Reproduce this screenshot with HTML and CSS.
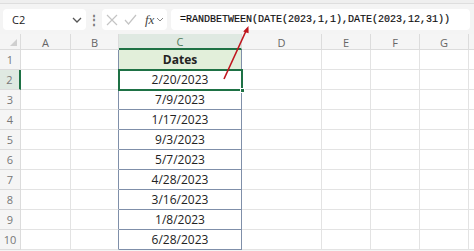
FILE: index.html
```html
<!DOCTYPE html>
<html>
<head>
<meta charset="utf-8">
<link rel="stylesheet" href="styles.css">
</head>
<body>
<div class="app">
  <div class="ribbon-edge"></div>
  <div class="formula-row">
    <div class="namebox"><span class="ref">C2</span>
      <svg class="chev" width="10" height="6" viewBox="0 0 10 6"><path d="M1 1 L5 5 L9 1" fill="none" stroke="#555" stroke-width="1.3"/></svg>
    </div>
    <div class="dots">⋮</div>
    <div class="iconbox">
      <svg width="12" height="12" viewBox="0 0 12 12"><path d="M1 1 L11 11 M11 1 L1 11" stroke="#c4c4c4" stroke-width="1.2"/></svg>
      <svg width="13" height="11" viewBox="0 0 13 11"><path d="M1 6 L4.5 10 L12 1" fill="none" stroke="#c4c4c4" stroke-width="1.2"/></svg>
      <span class="fx">fx</span>
      <svg width="8" height="5" viewBox="0 0 8 5"><path d="M1 1 L4 4 L7 1" fill="none" stroke="#888" stroke-width="1"/></svg>
    </div>
    <div class="formula">=RANDBETWEEN(DATE(2023,1,1),DATE(2023,12,31))</div>
  </div>
  <div class="sheet">
    <div class="hd corner"><span class="tri"></span></div>
    <div class="hd col">A</div><div class="hd col">B</div><div class="hd col sel-col">C</div><div class="hd col">D</div><div class="hd col">E</div><div class="hd col">F</div><div class="hd col">G</div><div class="hd col last"></div>

    <div class="hd row">1</div><div class="c"></div><div class="c pre"></div><div class="c data title">Dates</div><div class="c"></div><div class="c"></div><div class="c"></div><div class="c"></div><div class="c last"></div>
    <div class="hd row sel-row">2</div><div class="c"></div><div class="c pre"></div><div class="c data active">2/20/2023</div><div class="c"></div><div class="c"></div><div class="c"></div><div class="c"></div><div class="c last"></div>
    <div class="hd row">3</div><div class="c"></div><div class="c pre"></div><div class="c data">7/9/2023</div><div class="c"></div><div class="c"></div><div class="c"></div><div class="c"></div><div class="c last"></div>
    <div class="hd row">4</div><div class="c"></div><div class="c pre"></div><div class="c data">1/17/2023</div><div class="c"></div><div class="c"></div><div class="c"></div><div class="c"></div><div class="c last"></div>
    <div class="hd row">5</div><div class="c"></div><div class="c pre"></div><div class="c data">9/3/2023</div><div class="c"></div><div class="c"></div><div class="c"></div><div class="c"></div><div class="c last"></div>
    <div class="hd row">6</div><div class="c"></div><div class="c pre"></div><div class="c data">5/7/2023</div><div class="c"></div><div class="c"></div><div class="c"></div><div class="c"></div><div class="c last"></div>
    <div class="hd row">7</div><div class="c"></div><div class="c pre"></div><div class="c data">4/28/2023</div><div class="c"></div><div class="c"></div><div class="c"></div><div class="c"></div><div class="c last"></div>
    <div class="hd row">8</div><div class="c"></div><div class="c pre"></div><div class="c data">3/16/2023</div><div class="c"></div><div class="c"></div><div class="c"></div><div class="c"></div><div class="c last"></div>
    <div class="hd row">9</div><div class="c"></div><div class="c pre"></div><div class="c data">1/8/2023</div><div class="c"></div><div class="c"></div><div class="c"></div><div class="c"></div><div class="c last"></div>
    <div class="hd row">10</div><div class="c"></div><div class="c pre"></div><div class="c data">6/28/2023</div><div class="c"></div><div class="c"></div><div class="c"></div><div class="c"></div><div class="c last"></div>
  </div>
  <svg class="arrow" width="474" height="251" viewBox="0 0 474 251">
    <line x1="224" y1="79" x2="246" y2="31" stroke="#c0151d" stroke-width="1.6"/>
    <path d="M248.5 26 L243.2 31.5 L248.6 33.3 Z" fill="#c0151d"/>
  </svg>
</div>
</body>
</html>
```

FILE: styles.css
```css
html, body {
  margin: 0;
  padding: 0;
}
body {
  width: 474px;
  height: 251px;
  overflow: hidden;
  background: #ffffff;
  font-family: "Open Sans", "Noto Sans", sans-serif;
}
.app {
  position: relative;
  width: 474px;
  height: 251px;
  background: #f4f4f4;
}
.ribbon-edge {
  height: 3px;
  background: #efefef;
  border-bottom: 1px solid #dedede;
}
.formula-row {
  display: flex;
  align-items: center;
  height: 21px;
  padding: 5px 4px 4px 3px;
}
.namebox {
  width: 83px;
  height: 21px;
  box-sizing: border-box;
  background: #fff;
  border-radius: 4px;
  display: flex;
  align-items: center;
  justify-content: space-between;
  padding: 0 4px 0 9px;
  font-size: 11px;
  color: #222;
}
.chev { margin-top: 1px; }
.dots {
  width: 16px;
  text-align: center;
  color: #777;
  font-size: 12px;
  font-weight: bold;
}
.iconbox {
  width: 65px;
  height: 21px;
  box-sizing: border-box;
  background: #fff;
  border-radius: 4px;
  display: flex;
  align-items: center;
  gap: 6px;
  padding-left: 4px;
}
.fx {
  font-family: "Liberation Serif", serif;
  font-style: italic;
  font-size: 13px;
  color: #444;
  margin-left: 2px;
  margin-right: -4px;
}
.formula {
  flex: 1;
  margin-left: 4px;
  height: 21px;
  box-sizing: border-box;
  background: #fff;
  border-radius: 4px;
  padding-left: 9px;
  font-family: "Liberation Mono", monospace;
  font-size: 10px;
  line-height: 21px;
  color: #111;
  -webkit-text-stroke: 0.2px #111;
}
.sheet {
  display: grid;
  grid-template-columns: 21px 50px 48px 123px 80px 49px 49px 49px 5px;
  grid-template-rows: 16px repeat(10, 20px);
  background: #fff;
}
.hd {
  background: #f5f5f5;
  color: #666;
  font-size: 11px;
  display: flex;
  align-items: center;
  justify-content: center;
  box-sizing: border-box;
  border-right: 1px solid #dcdcdc;
  border-bottom: 1px solid #dcdcdc;
}
.corner { position: relative; }
.tri {
  position: absolute;
  right: 3px;
  bottom: 3px;
  width: 0;
  height: 0;
  border-left: 7px solid transparent;
  border-bottom: 7px solid #cfcfcf;
}
.col { padding-top: 1px; }
.sel-col {
  background: #dfe9e2;
  color: #4f7a5c;
  border-bottom: 2px solid #1e7145;
}
.row { color: #777; }
.sel-row {
  background: #dfe9e2;
  border-right: 2px solid #1e7145;
}
.hd.last, .c.last { border-right: none; }
.c {
  box-sizing: border-box;
  border-right: 1px solid #e3e3e3;
  border-bottom: 1px solid #e3e3e3;
}
.c.pre { border-right-color: #7f8fa9; }
.data {
  border-right: 1px solid #7f8fa9;
  border-bottom: 1px solid #7f8fa9;
  display: flex;
  align-items: center;
  justify-content: center;
  font-size: 12px;
  color: #222;
}
.title {
  background: #e2efda;
  font-weight: bold;
}
.active {
  position: relative;
  outline: 2px solid #1e7145;
  outline-offset: -1px;
  border-color: transparent;
}
.active::after {
  content: "";
  position: absolute;
  right: -4px;
  bottom: -4px;
  width: 5px;
  height: 5px;
  background: #1e7145;
  border: 1px solid #fff;
  box-sizing: border-box;
}
.arrow {
  position: absolute;
  left: 0;
  top: 0;
  pointer-events: none;
}
```
